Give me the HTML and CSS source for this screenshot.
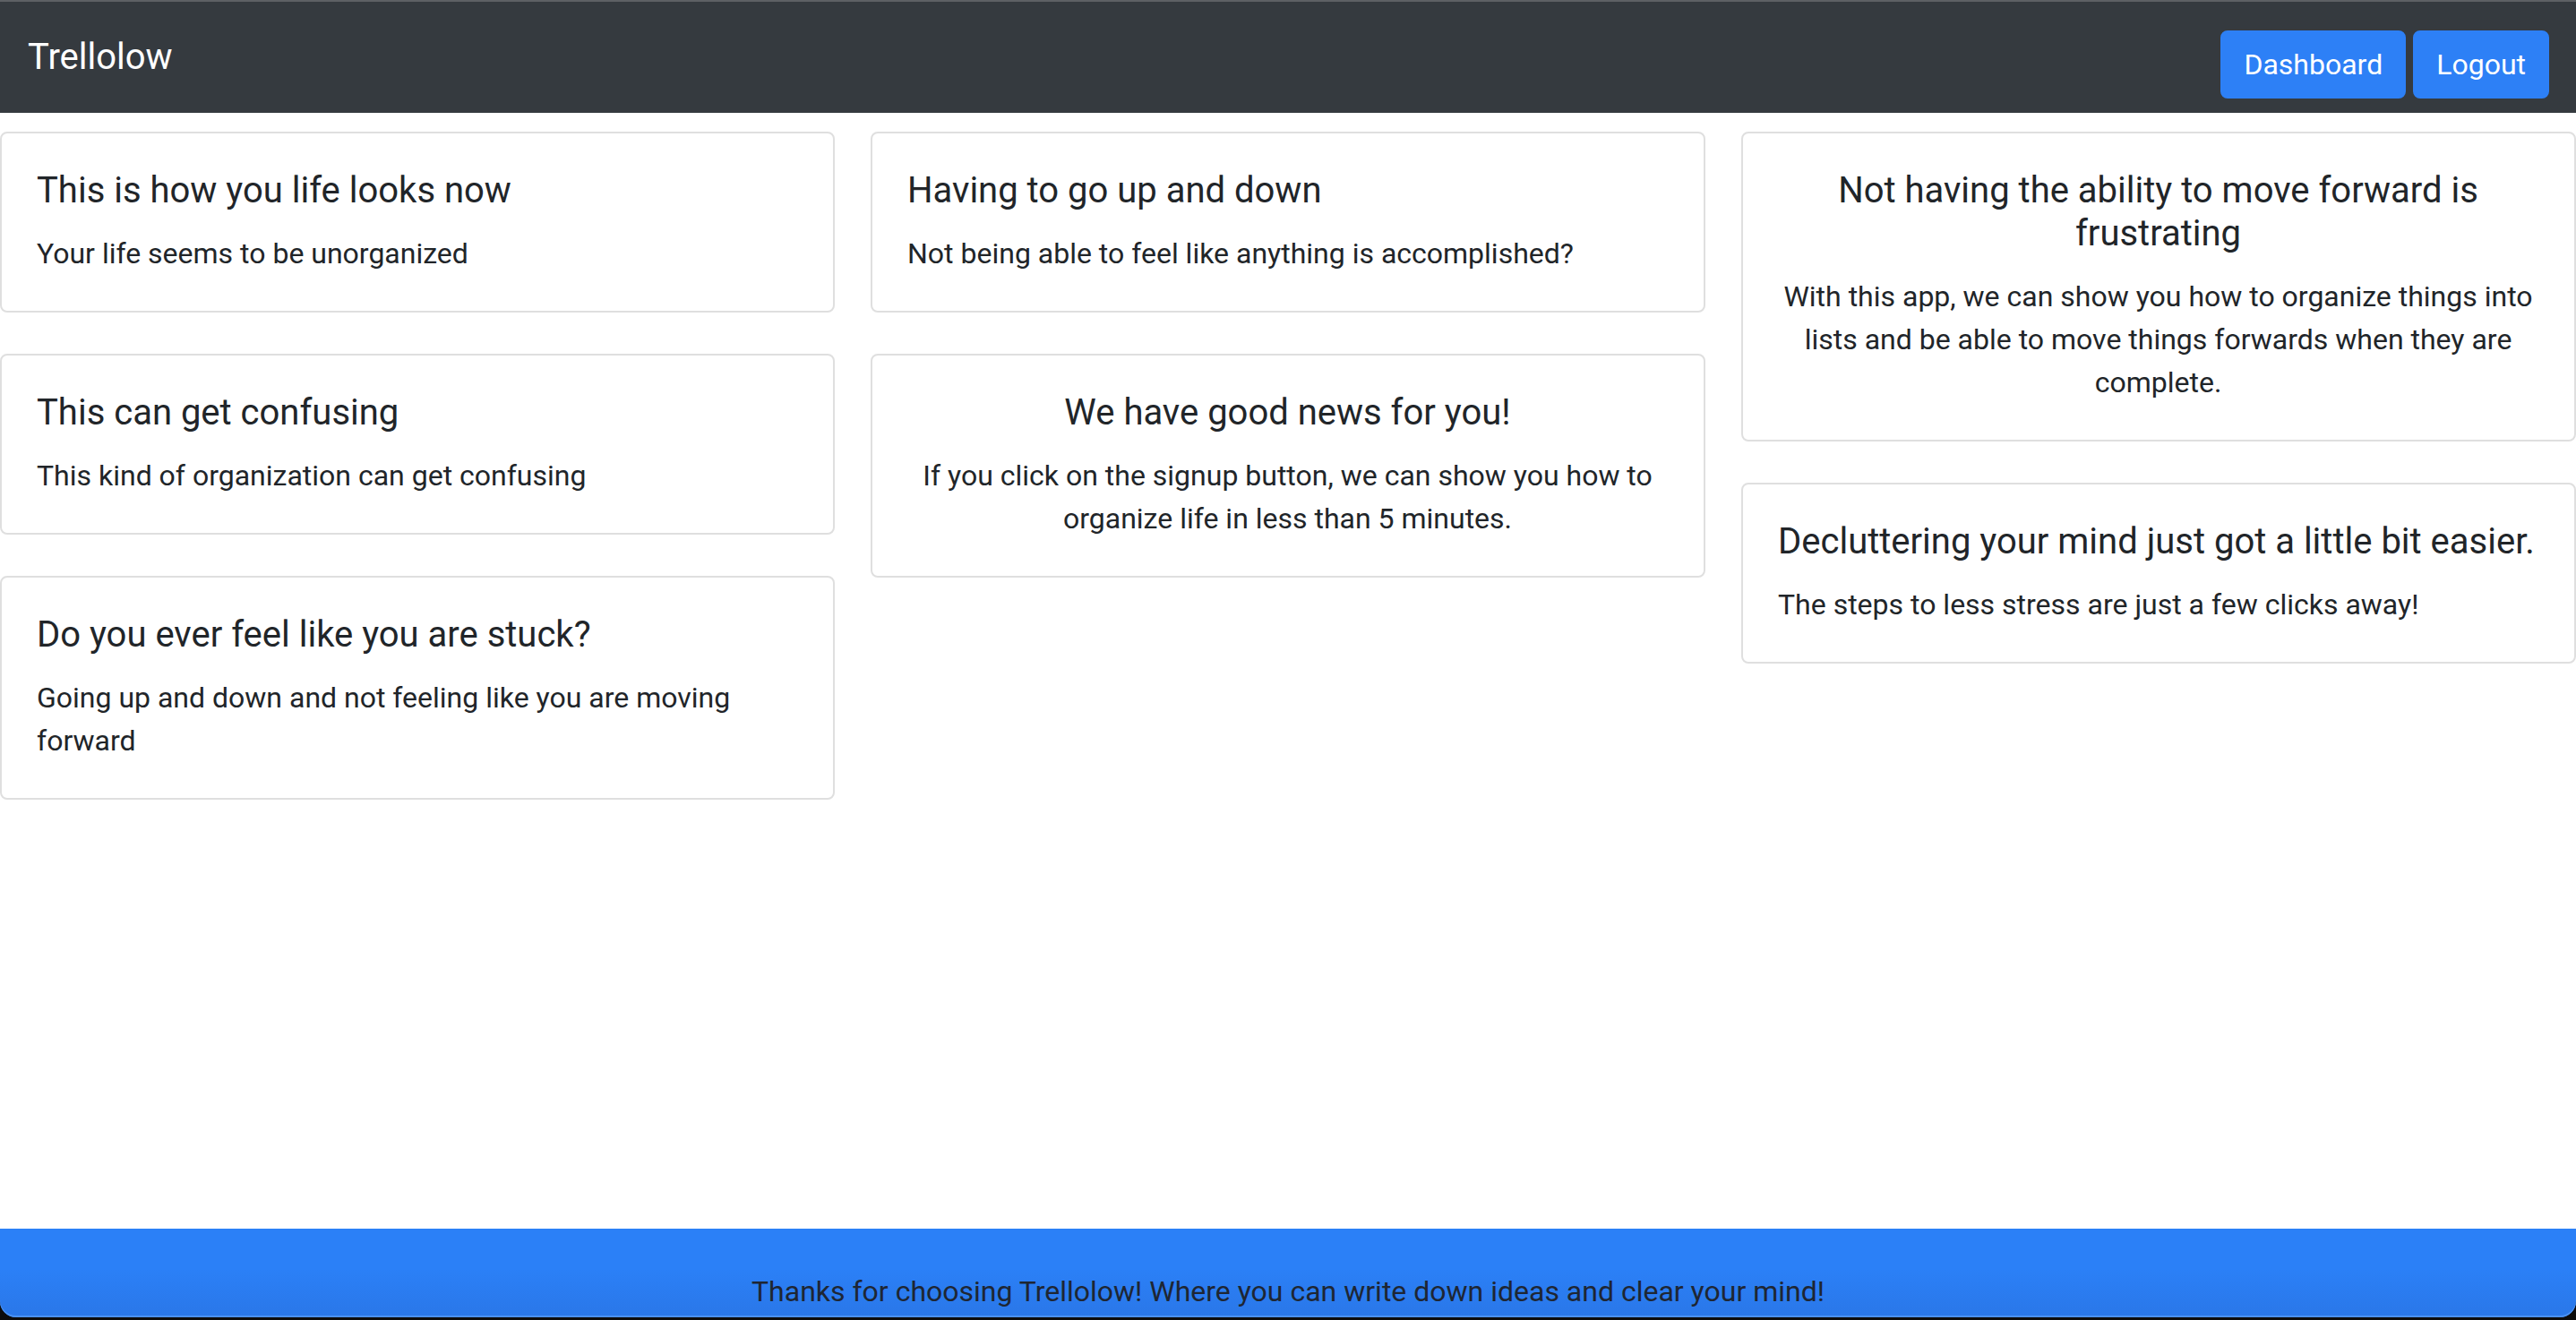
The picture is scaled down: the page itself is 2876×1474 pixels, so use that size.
FILE: index.html
```html
<!DOCTYPE html>
<html lang="en">
<head>
<meta charset="utf-8">
<title>Trellolow</title>
<link rel="stylesheet" href="styles.css">
</head>
<body>
<nav class="navbar">
  <a class="brand" href="#">Trellolow</a>
  <div class="nav-actions">
    <a class="btn" href="#">Dashboard</a>
    <a class="btn" href="#">Logout</a>
  </div>
</nav>
<main class="card-columns">
  <div class="column">
    <div class="card">
      <div class="card-body">
        <h5 class="card-title">This is how you life looks now</h5>
        <p class="card-text">Your life seems to be unorganized</p>
      </div>
    </div>
    <div class="card">
      <div class="card-body">
        <h5 class="card-title">This can get confusing</h5>
        <p class="card-text">This kind of organization can get confusing</p>
      </div>
    </div>
    <div class="card">
      <div class="card-body">
        <h5 class="card-title">Do you ever feel like you are stuck?</h5>
        <p class="card-text">Going up and down and not feeling like you are moving forward</p>
      </div>
    </div>
  </div>
  <div class="column">
    <div class="card">
      <div class="card-body">
        <h5 class="card-title">Having to go up and down</h5>
        <p class="card-text">Not being able to feel like anything is accomplished?</p>
      </div>
    </div>
    <div class="card">
      <div class="card-body centered">
        <h5 class="card-title">We have good news for you!</h5>
        <p class="card-text">If you click on the signup button, we can show you how to organize life in less than 5 minutes.</p>
      </div>
    </div>
  </div>
  <div class="column">
    <div class="card">
      <div class="card-body centered">
        <h5 class="card-title">Not having the ability to move forward is frustrating</h5>
        <p class="card-text">With this app, we can show you how to organize things into lists and be able to move things forwards when they are complete.</p>
      </div>
    </div>
    <div class="card">
      <div class="card-body">
        <h5 class="card-title">Decluttering your mind just got a little bit easier.</h5>
        <p class="card-text">The steps to less stress are just a few clicks away!</p>
      </div>
    </div>
  </div>
</main>
<div class="footer-frame">
  <footer class="footer">
    <p class="footer-text">Thanks for choosing Trellolow! Where you can write down ideas and clear your mind!</p>
  </footer>
</div>
</body>
</html>
```

FILE: styles.css
```css
html,
body {
  margin: 0;
  padding: 0;
}

body {
  height: 100vh;
  overflow: hidden;
  display: flex;
  flex-direction: column;
  font-family: Roboto, "Liberation Sans", Arial, sans-serif;
  font-size: 32px;
  line-height: 1.5;
  color: #212529;
  background: #ffffff;
}

/* ---------- navbar ---------- */
.navbar {
  flex: 0 0 auto;
  display: flex;
  justify-content: space-between;
  align-items: center;
  padding: 16px 30px 16px 31px;
  background: #353a3f;
  border-top: 2px solid #5d6064;
}

.brand {
  font-size: 40px;
  line-height: 60px;
  padding: 10px 0;
  color: #ffffff;
  text-decoration: none;
}

.nav-actions {
  display: flex;
  gap: 8px;
  margin-top: 16px;
}

.btn {
  display: inline-block;
  font-size: 32px;
  line-height: 48px;
  padding: 12px 24px;
  border: 2px solid #2d80f6;
  border-radius: 8px;
  background: #2d80f6;
  color: #ffffff;
  text-decoration: none;
}

/* ---------- cards ---------- */
.card-columns {
  flex: 1 1 auto;
  display: flex;
  align-items: flex-start;
  gap: 40px;
  padding-top: 21px;
}

.column {
  flex: 1 1 0;
  min-width: 0;
  display: flex;
  flex-direction: column;
  gap: 46px;
}

.card {
  border: 2px solid #dfdfdf;
  border-radius: 8px;
  background: #ffffff;
}

.card-body {
  padding: 40px 40px 40px 39px;
}

.centered {
  text-align: center;
}

.card-title {
  margin: 0 0 22px;
  font-size: 40px;
  line-height: 48px;
  font-weight: 400;
}

.card-text {
  margin: 0;
  font-size: 32px;
  line-height: 48px;
}

/* ---------- footer ---------- */
.footer-frame {
  flex: 0 0 102px;
  box-sizing: border-box;
  padding-bottom: 3px;
  background: #0c0c0c;
}

.footer {
  height: 100%;
  box-sizing: border-box;
  padding-top: 46px;
  text-align: center;
  border-radius: 0 0 18px 18px;
  background: linear-gradient(to bottom, #2b80f7 0%, #2b80f7 45%, #2a77e8 100%);
  box-shadow: inset 0 -2px 0 #4a91f2;
}

.footer-text {
  margin: 0;
  font-size: 32px;
  line-height: 48px;
  color: #1e2633;
}
```
